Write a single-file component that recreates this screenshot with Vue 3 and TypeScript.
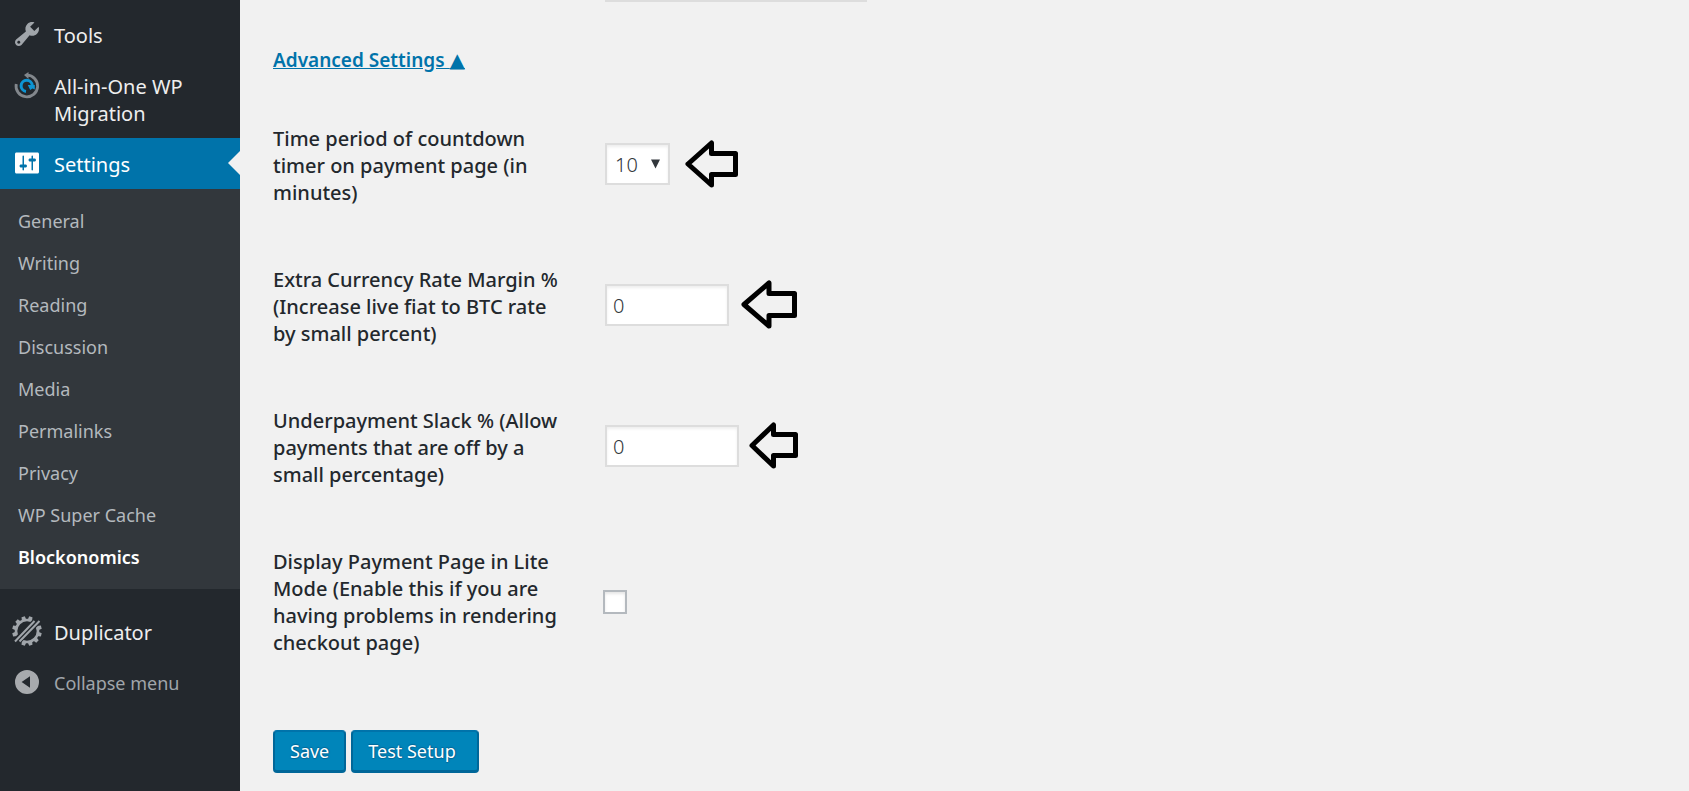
<script setup lang="ts">
import { ref } from 'vue'

const submenu: string[] = [
  'General', 'Writing', 'Reading', 'Discussion', 'Media',
  'Permalinks', 'Privacy', 'WP Super Cache', 'Blockonomics',
]
const current = 'Blockonomics'
const teeth: number[] = Array.from({ length: 12 }, (_, i) => i * 30 + 15)

const period = ref('10')
const margin = ref('0')
const slack = ref('0')
const lite = ref(false)
const open = ref(true)
</script>

<template>
  <div class="admin">
    <nav class="sidebar" aria-label="Main menu">
      <a class="item" href="#tools">
        <svg class="icon" viewBox="0 0 20 20" aria-hidden="true">
          <path fill="#a0a5aa" d="M16.68 9.77c-1.34 1.34-3.3 1.67-4.95.99l-5.41 6.52c-.99.99-2.59.99-3.58 0s-.99-2.59 0-3.57l6.52-5.42c-.68-1.65-.35-3.61.99-4.95 1.28-1.28 3.12-1.62 4.72-1.06l-2.89 2.89 2.82 2.82 2.86-2.87c.53 1.58.18 3.39-1.08 4.65zM3.81 16.21c.4.39 1.04.39 1.43 0 .4-.4.4-1.04 0-1.43-.39-.4-1.03-.4-1.43 0-.39.39-.39 1.03 0 1.43z" />
        </svg>
        <span>Tools</span>
      </a>
      <a class="item" href="#migration">
        <svg class="icon" viewBox="0 0 30 30" fill="none" aria-hidden="true">
          <path stroke="#82878c" stroke-width="2.8" d="M4.2 14A10.8 10.8 0 1 0 15 5.2" />
          <path fill="#82878c" d="M16.500 2v7L12 5z" />
          <path stroke="#0d94d2" stroke-width="3" d="M14 21.400A5.600 5.600 0 1 1 20.300 15.500" />
          <path fill="#0d94d2" d="M15.800 15h7v4.500l-2.400-1-2.200 1.600z" />
        </svg>
        <span>All-in-One WP Migration</span>
      </a>
      <a class="item active" href="#settings">
        <svg class="icon" viewBox="0 0 20 20" aria-hidden="true">
          <path fill="#fff" d="M18 16V4c0-.55-.45-1-1-1H3c-.55 0-1 .45-1 1v12c0 .55.45 1 1 1h14c.55 0 1-.45 1-1zM8 11h1c.55 0 1 .45 1 1s-.45 1-1 1H8v1.5c0 .28-.22.5-.5.5s-.5-.22-.5-.5V13H6c-.55 0-1-.45-1-1s.45-1 1-1h1V5.5c0-.28.22-.5.5-.5s.5.22.5.5V11zm5-2h-1c-.55 0-1-.45-1-1s.45-1 1-1h1V5.5c0-.28.22-.5.5-.5s.5.22.5.5V7h1c.55 0 1 .45 1 1s-.45 1-1 1h-1v5.5c0 .28-.22.5-.5.5s-.5-.22-.5-.5V9z" />
        </svg>
        <span>Settings</span>
      </a>
      <ul class="submenu">
        <li v-for="name in submenu" :key="name">
          <a href="#sub" :class="{ current: name === current }">{{ name }}</a>
        </li>
      </ul>
      <a class="item" href="#duplicator">
        <svg class="icon" viewBox="0 0 30 30" aria-hidden="true">
          <circle cx="15" cy="15" r="11" fill="none" stroke="#a0a5aa" stroke-width="2.600" />
          <g fill="#a0a5aa">
            <path v-for="a in teeth" :key="a" :transform="`rotate(${a} 15 15)`" d="M12.600 4.400l.7-4.200h3.400l.7 4.200z" />
          </g>
          <path stroke="#23282d" stroke-width="8" d="M2.500 27.500L27.500 2.500" />
          <path stroke="#a0a5aa" stroke-width="2" d="M3 25.500L22.500 5M7.500 25.500L27.500 5" />
        </svg>
        <span>Duplicator</span>
      </a>
      <button class="item collapse" type="button">
        <svg class="icon" viewBox="0 0 30 30" aria-hidden="true">
          <path fill="#a7aaad" fill-rule="evenodd" d="M15 3a12 12 0 1 0 0 24a12 12 0 1 0 0-24zM18 9.3v11.4L9.6 15z" />
        </svg>
        <span>Collapse menu</span>
      </button>
    </nav>

    <main class="content">
      <div class="field-edge"></div>
      <a class="toggle" href="#advanced" @click.prevent="open = !open">Advanced Settings <span class="mark">▲</span></a>
      <form @submit.prevent>
        <div v-show="open" class="rows">
          <div class="row">
            <label for="period">Time period of countdown timer on payment page (in minutes)</label>
            <div class="control">
              <span class="select-wrap">
                <select id="period" v-model="period">
                  <option>10</option>
                  <option>15</option>
                  <option>20</option>
                </select>
                <svg class="caret" viewBox="0 0 10 10" aria-hidden="true"><path fill="#32373c" d="M0 0h10L5 10z" /></svg>
              </span>
              <svg class="arrow first" width="53" height="48" viewBox="0 0 53 48" aria-hidden="true">
                <path d="M3 24L26.500 3V13.500H50.500V34.500H26.500V45z" />
              </svg>
            </div>
          </div>
          <div class="row">
            <label for="margin">Extra Currency Rate Margin % (Increase live fiat to BTC rate by small percent)</label>
            <div class="control">
              <input id="margin" v-model="margin" class="text" type="text" />
              <svg class="arrow second" width="56" height="49" viewBox="0 0 56 49" aria-hidden="true">
                <path d="M3 24.500L28 3V13.500H53.500V35.500H28V46z" />
              </svg>
            </div>
          </div>
          <div class="row">
            <label for="slack">Underpayment Slack % (Allow payments that are off by a small percentage)</label>
            <div class="control">
              <input id="slack" v-model="slack" class="text wide" type="text" />
              <svg class="arrow third" width="49" height="47" viewBox="0 0 49 47" aria-hidden="true">
                <path d="M3 23.500L24.500 3V12.500H46.500V33.500H24.500V44z" />
              </svg>
            </div>
          </div>
          <div class="row">
            <label for="lite">Display Payment Page in Lite Mode (Enable this if you are having problems in rendering checkout page)</label>
            <div class="control">
              <input id="lite" v-model="lite" class="check" type="checkbox" />
            </div>
          </div>
        </div>
        <div class="actions">
          <button type="submit">Save</button>
          <button class="test" type="button">Test Setup</button>
        </div>
      </form>
    </main>
  </div>
</template>

<style>
body {
  margin: 0;
  background: #f1f1f1;
}
</style>

<style scoped>
.admin {
  box-sizing: border-box;
  display: flex;
  min-height: 100vh;
  font-family: "Noto Sans", "Open Sans", sans-serif;
  font-size: 20px;
  line-height: 27px;
  color: #23282d;
}
.sidebar {
  box-sizing: border-box;
  flex: none;
  width: 240px;
  padding-top: 9px;
  background: #23282d;
}
.item {
  box-sizing: border-box;
  position: relative;
  display: flex;
  align-items: flex-start;
  width: 100%;
  gap: 12px;
  padding: 13px 36px 11px 12px;
  color: #eee;
  text-decoration: none;
}
.icon {
  flex: none;
  width: 30px;
  height: 30px;
  margin: -3px 0 0;
}
.active {
  background: #0073aa;
  color: #fff;
}
.active::after {
  content: "";
  position: absolute;
  top: 13px;
  right: 0;
  border: solid transparent;
  border-width: 12px 12px 12px 0;
  border-right-color: #f1f1f1;
}
.collapse {
  border: 0;
  background: none;
  font: inherit;
  font-size: 18px;
  color: #a0a5aa;
  text-align: left;
  cursor: pointer;
}
.submenu {
  list-style: none;
  margin: 0 0 17px;
  padding: 11px 0;
  background: #32373c;
  font-size: 18px;
}
.submenu a {
  display: block;
  padding: 8px 18px 7px;
  color: #b4b9be;
  text-decoration: none;
}
.submenu .current {
  color: #fff;
  font-weight: 600;
}
.content {
  flex: 1;
  padding: 0 33px 18px;
}
.field-edge {
  width: 262px;
  height: 2px;
  margin-left: 332px;
  background: #ddd;
}
.toggle {
  display: inline-block;
  margin: 45px 0 21px;
  color: #0073aa;
  font-size: 19px;
  font-weight: 600;
}
.mark {
  font-family: "DejaVu Sans", sans-serif;
  font-size: 20px;
  font-weight: 400;
  line-height: 20px;
}
.row {
  display: grid;
  grid-template-columns: 288px 1fr;
  column-gap: 42px;
  align-items: center;
  padding: 30px 0;
  font-weight: 500;
}
.control {
  display: flex;
  align-items: center;
  padding: 0 0 4px;
}
.select-wrap {
  position: relative;
  display: flex;
}
select,
.text {
  box-sizing: border-box;
  height: 42px;
  margin: 0 0 0 2px;
  border: 2px solid #ddd;
  border-radius: 0;
  background: #fff;
  box-shadow: inset 0 2px 3px rgba(0, 0, 0, 0.07);
  color: #32373c;
  font: inherit;
  font-weight: 300;
}
select {
  appearance: none;
  width: 65px;
  padding: 2px 24px 0 8px;
}
.caret {
  position: absolute;
  top: 16px;
  right: 10px;
  width: 9px;
  height: 10px;
  pointer-events: none;
}
.text {
  width: 124px;
  padding: 2px 6px 0;
}
.wide {
  width: 134px;
}
.check {
  appearance: none;
  box-sizing: border-box;
  width: 24px;
  height: 24px;
  margin: 4px 0 0;
  border: 2px solid #b4b9be;
  background: #fff;
  box-shadow: inset 0 2px 3px rgba(0, 0, 0, 0.1);
}
.check:checked {
  background: #1e8cbe;
}
.arrow {
  flex: none;
  margin: -4px 0;
  fill: none;
  stroke: #000;
  stroke-width: 5px;
  stroke-linejoin: round;
}
.first {
  margin-left: 15px;
}
.second {
  margin-left: 12px;
}
.third {
  margin-left: 10px;
}
.actions {
  display: flex;
  gap: 5px;
  padding-top: 44px;
}
.actions button {
  box-sizing: border-box;
  height: 43px;
  padding: 0 15px;
  border: 2px solid #006799;
  border-top-color: #0073aa;
  border-bottom-width: 3px;
  border-radius: 4px;
  background: #0085ba;
  color: #fff;
  font: inherit;
  font-size: 18px;
  text-shadow: 0 -1px 1px #006799, 1px 0 1px #006799, 0 1px 1px #006799;
  cursor: pointer;
}
.actions .test {
  padding-right: 21px;
}
</style>
